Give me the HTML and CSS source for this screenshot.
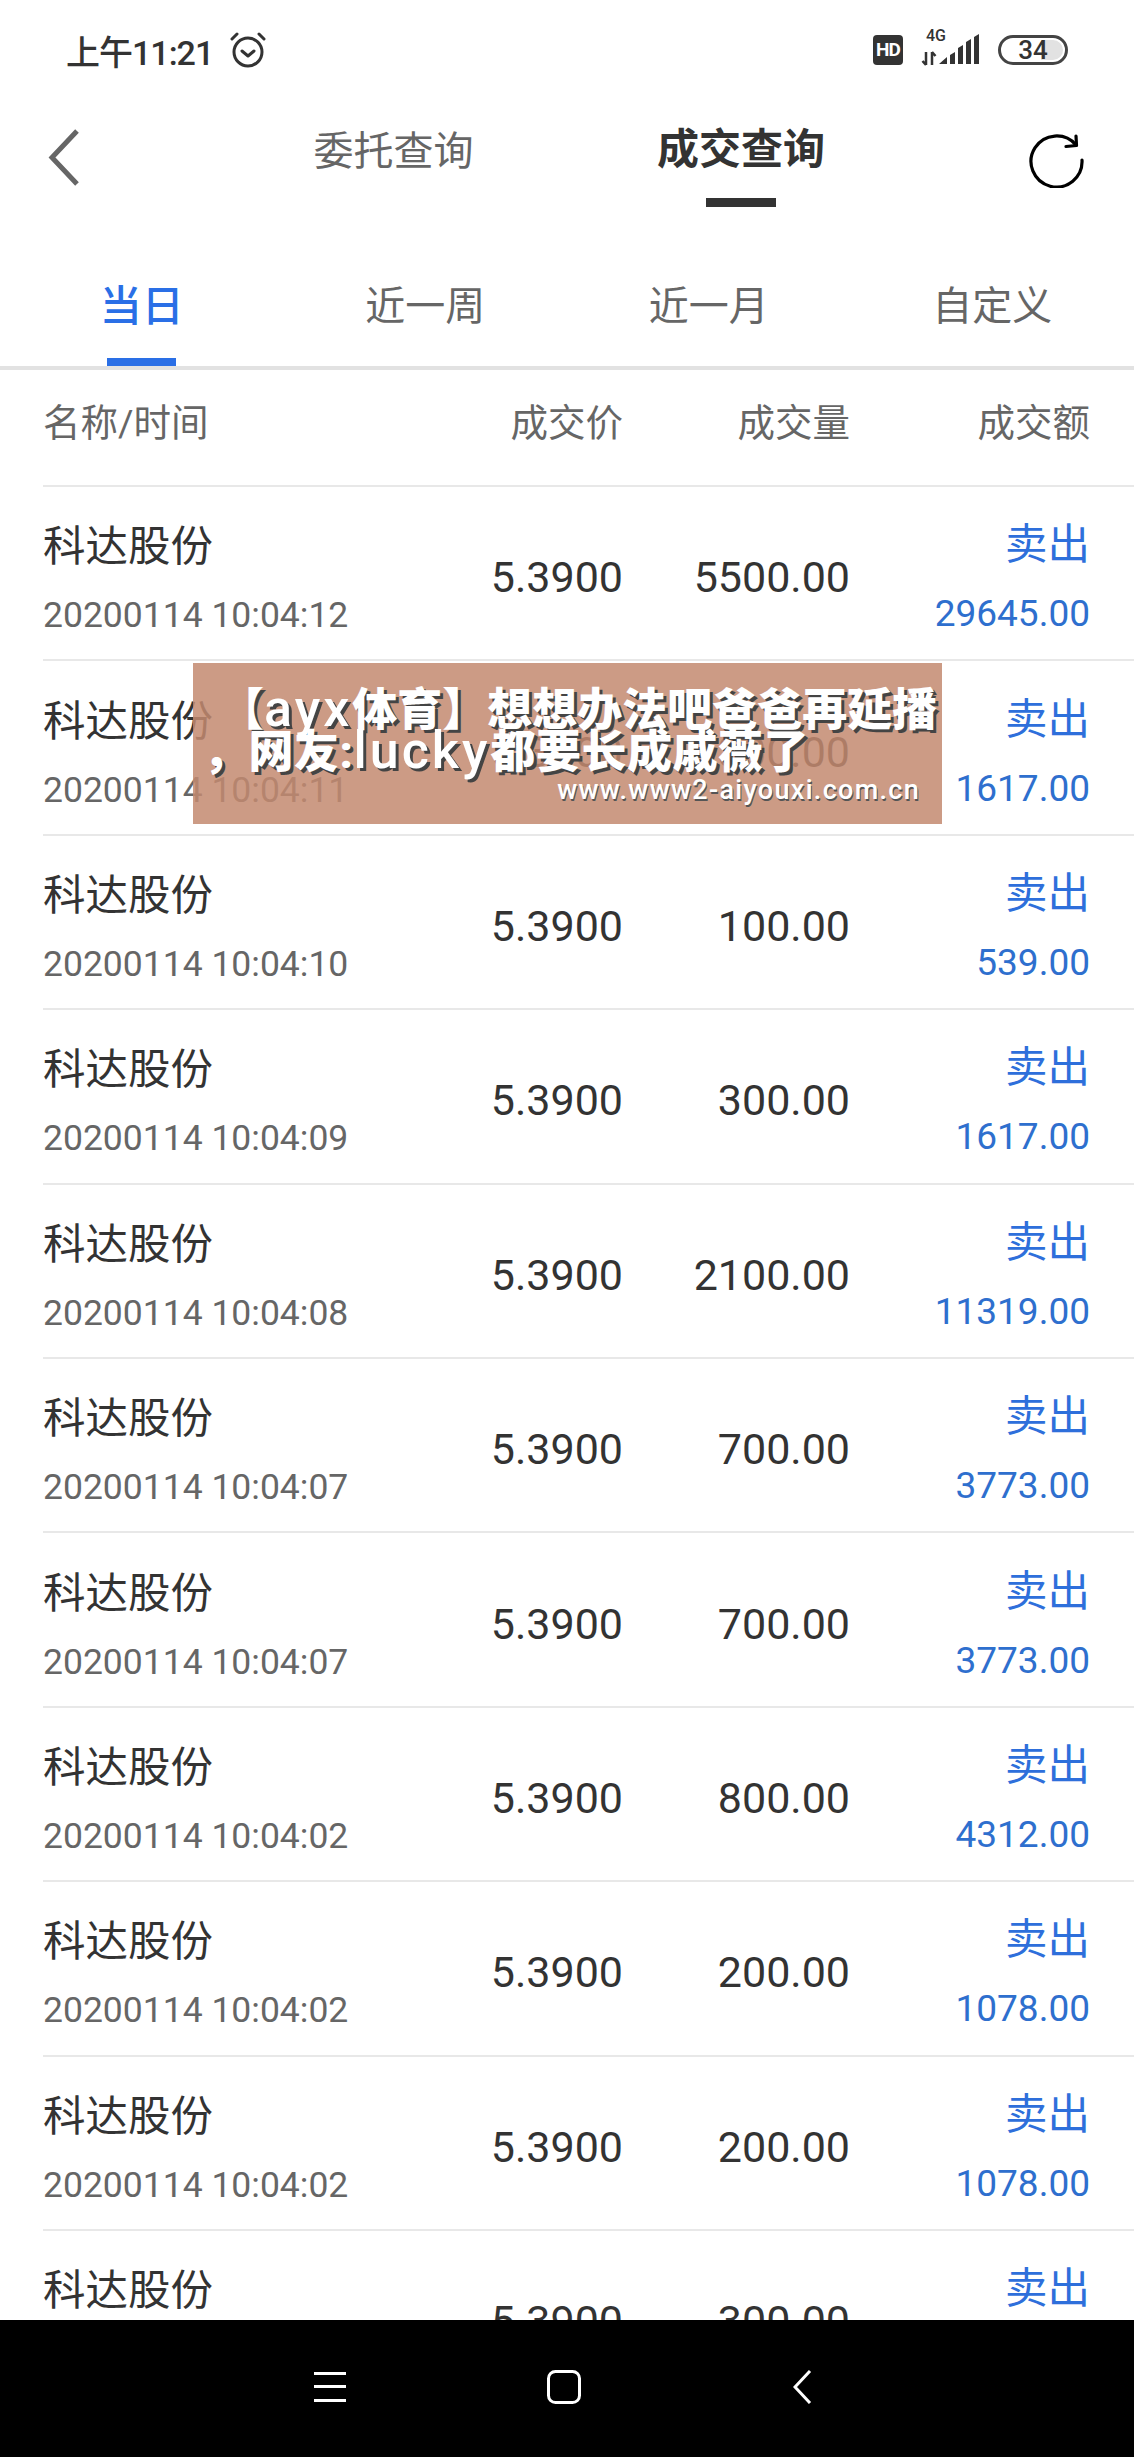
FILE: index.html
```html
<!DOCTYPE html>
<html lang="zh-CN">
  <head>
    <meta charset="UTF-8" />
    <meta name="viewport" content="width=device-width, initial-scale=1.0" />
    <title>成交查询</title>
    <link rel="stylesheet" href="styles.css">
  </head>
  <body>
    <div class="page">
      <div class="status-bar">
        <div class="status-left">
          <span class="clock">上午11:21</span>
          <svg class="alarm" width="36" height="36" viewBox="0 0 36 36" fill="none" stroke="#333" stroke-width="3" stroke-linecap="round" stroke-linejoin="round">
            <circle cx="18" cy="20" r="14" />
            <path d="M12 19l6 5 6-5" />
            <path d="M2 7l5-5M34 7l-5-5" />
          </svg>
        </div>
        <div class="status-right">
          <span class="hd">HD</span>
          <div class="signal">
            <span class="net">4G</span>
            <svg width="60" height="32" viewBox="0 0 60 32" fill="#333">
              <path d="M5 18v13M1.500 27l3.500 4M11 31V18M11 18l3.500 4" fill="none" stroke="#333" stroke-width="2.500" />
              <path d="M18 30l8-7v7zM29 21l5-3v12h-5zM37 14l5-3v19h-5zM45 8l5-3v25h-5zM53 3l5-3v30h-5z" />
            </svg>
          </div>
          <div class="battery"><span>34</span></div>
        </div>
      </div>

      <div class="nav">
        <svg class="back" width="31" height="57" viewBox="0 0 31 57" fill="none" stroke="#666" stroke-width="5">
          <path d="M29 2L4 28.500 29 55" />
        </svg>
        <div class="title">委托查询</div>
        <div class="title active">成交查询</div>
        <svg class="refresh" width="56" height="56" viewBox="0 0 56 56" fill="none" stroke="#000" stroke-width="3.200" stroke-linecap="round" stroke-linejoin="round">
          <path d="M47 13A25.500 25.500 0 1 0 53 28" />
          <path d="M37 14.500l10.500-1L47 4" />
        </svg>
      </div>

      <div class="tabs">
        <div class="tab active">当日</div>
        <div class="tab">近一周</div>
        <div class="tab">近一月</div>
        <div class="tab">自定义</div>
      </div>

      <div class="list">
        <div class="list-head">
          <div>名称/时间</div>
          <div class="num">成交价</div>
          <div class="num">成交量</div>
          <div class="num">成交额</div>
        </div>

        <div class="row">
          <div class="stock"><div class="name">科达股份</div><div class="time">20200114 10:04:12</div></div>
          <div class="num">5.3900</div>
          <div class="num">5500.00</div>
          <div class="deal"><div class="side">卖出</div><div class="sum">29645.00</div></div>
        </div>
        <div class="row">
          <div class="stock"><div class="name">科达股份</div><div class="time">20200114 10:04:11</div></div>
          <div class="num">5.3900</div>
          <div class="num">300.00</div>
          <div class="deal"><div class="side">卖出</div><div class="sum">1617.00</div></div>
        </div>
        <div class="row">
          <div class="stock"><div class="name">科达股份</div><div class="time">20200114 10:04:10</div></div>
          <div class="num">5.3900</div>
          <div class="num">100.00</div>
          <div class="deal"><div class="side">卖出</div><div class="sum">539.00</div></div>
        </div>
        <div class="row">
          <div class="stock"><div class="name">科达股份</div><div class="time">20200114 10:04:09</div></div>
          <div class="num">5.3900</div>
          <div class="num">300.00</div>
          <div class="deal"><div class="side">卖出</div><div class="sum">1617.00</div></div>
        </div>
        <div class="row">
          <div class="stock"><div class="name">科达股份</div><div class="time">20200114 10:04:08</div></div>
          <div class="num">5.3900</div>
          <div class="num">2100.00</div>
          <div class="deal"><div class="side">卖出</div><div class="sum">11319.00</div></div>
        </div>
        <div class="row">
          <div class="stock"><div class="name">科达股份</div><div class="time">20200114 10:04:07</div></div>
          <div class="num">5.3900</div>
          <div class="num">700.00</div>
          <div class="deal"><div class="side">卖出</div><div class="sum">3773.00</div></div>
        </div>
        <div class="row">
          <div class="stock"><div class="name">科达股份</div><div class="time">20200114 10:04:07</div></div>
          <div class="num">5.3900</div>
          <div class="num">700.00</div>
          <div class="deal"><div class="side">卖出</div><div class="sum">3773.00</div></div>
        </div>
        <div class="row">
          <div class="stock"><div class="name">科达股份</div><div class="time">20200114 10:04:02</div></div>
          <div class="num">5.3900</div>
          <div class="num">800.00</div>
          <div class="deal"><div class="side">卖出</div><div class="sum">4312.00</div></div>
        </div>
        <div class="row">
          <div class="stock"><div class="name">科达股份</div><div class="time">20200114 10:04:02</div></div>
          <div class="num">5.3900</div>
          <div class="num">200.00</div>
          <div class="deal"><div class="side">卖出</div><div class="sum">1078.00</div></div>
        </div>
        <div class="row">
          <div class="stock"><div class="name">科达股份</div><div class="time">20200114 10:04:02</div></div>
          <div class="num">5.3900</div>
          <div class="num">200.00</div>
          <div class="deal"><div class="side">卖出</div><div class="sum">1078.00</div></div>
        </div>
        <div class="row">
          <div class="stock"><div class="name">科达股份</div><div class="time">20200114 10:04:02</div></div>
          <div class="num">5.3900</div>
          <div class="num">300.00</div>
          <div class="deal"><div class="side">卖出</div><div class="sum">1617.00</div></div>
        </div>
      </div>

      <div class="nav-bar">
        <svg width="32" height="30" viewBox="0 0 32 30" fill="#fff">
          <rect x="0" y="0" width="32" height="3" />
          <rect x="0" y="13" width="32" height="3" />
          <rect x="0" y="27" width="32" height="3" />
        </svg>
        <svg width="34" height="34" viewBox="0 0 34 34" fill="none" stroke="#fff" stroke-width="3">
          <rect x="1.500" y="1.500" width="31" height="31" rx="7" />
        </svg>
        <svg class="nav-back" width="19" height="34" viewBox="0 0 19 34" fill="none" stroke="#fff" stroke-width="3">
          <path d="M17 1L2 17l15 16" />
        </svg>
      </div>

      <div class="banner">
        <div class="banner-line first">【<span class="latin">ayx</span>体育】想想办法吧爸爸再延播</div>
        <div class="banner-line second">，网友:<span class="latin">lucky</span>都要长成戚薇了</div>
        <div class="banner-url">www.www2-aiyouxi.com.cn</div>
      </div>
    </div>
  </body>
</html>
```

FILE: styles.css
```css
* {
  box-sizing: border-box;
}
html,
body {
  margin: 0;
  padding: 0;
  background-color: #fff;
}
body {
  font-family: Roboto, "Noto Sans CJK SC", sans-serif;
  color: #333;
}
.page {
  position: relative;
  display: flex;
  flex-direction: column;
  width: 1134px;
  height: 2457px;
  overflow: hidden;
}

/* status bar */
.status-bar {
  display: flex;
  justify-content: space-between;
  align-items: center;
  height: 100px;
  padding: 0 66px 0 66px;
}
.status-left,
.status-right {
  display: flex;
  align-items: center;
}
.clock {
  font-size: 34px;
  font-weight: 500;
  letter-spacing: -1px;
  color: #333;
}
.alarm {
  margin-left: 17px;
}
.hd {
  width: 30px;
  height: 30px;
  border-radius: 4px;
  background-color: #333;
  color: #fff;
  font-size: 19px;
  font-weight: 700;
  line-height: 30px;
  text-align: center;
  letter-spacing: -1px;
}
.signal {
  position: relative;
  width: 60px;
  height: 32px;
  margin: 0 17px 0 18px;
}
.signal svg {
  display: block;
}
.net {
  position: absolute;
  left: 5px;
  top: -7px;
  font-size: 16px;
  font-weight: 500;
  line-height: 18px;
}
.battery {
  position: relative;
  width: 70px;
  height: 30px;
  border: 3px solid #444;
  border-radius: 15px;
  overflow: hidden;
  text-align: center;
  font-size: 26px;
  font-weight: 500;
  line-height: 24px;
}
.battery::after {
  content: "";
  position: absolute;
  top: 2px;
  right: 2px;
  bottom: 2px;
  width: 22px;
  border-radius: 0 10px 10px 0;
  background-color: #e2e2e2;
}
.battery span {
  position: relative;
  z-index: 1;
}

/* title row */
.nav {
  display: flex;
  align-items: flex-start;
  height: 130px;
}
.back {
  margin: 29px 0 0 48px;
}
.title {
  position: relative;
  width: 161px;
  margin-left: 234px;
  margin-top: 27px;
  font-size: 40px;
  line-height: 50px;
  text-align: center;
  color: #666;
  white-space: nowrap;
}
.title.active {
  width: 170px;
  margin-left: 182px;
  margin-top: 25px;
  font-size: 42px;
  font-weight: 700;
  color: #333;
}
.title.active::after {
  content: "";
  position: absolute;
  left: 50px;
  top: 73px;
  width: 70px;
  height: 9px;
  background-color: #333;
}
.refresh {
  margin: 32px 0 0 203px;
}

/* period tabs */
.tabs {
  display: flex;
  height: 140px;
  border-bottom: 4px solid #e2e2e2;
}
.tab {
  position: relative;
  flex: 1;
  padding-top: 53px;
  font-size: 40px;
  line-height: 48px;
  text-align: center;
  color: #666;
}
.tab.active {
  font-size: 42px;
  font-weight: 500;
  color: #2a6fe6;
}
.tab.active::after {
  content: "";
  position: absolute;
  left: 107px;
  bottom: 0;
  width: 69px;
  height: 8px;
  background-color: #2a6fe6;
}

/* deal list */
.list {
  flex: 1;
  min-height: 0;
  overflow: hidden;
}
.list-head,
.row {
  display: grid;
  grid-template-columns: 1fr 200px 227px 240px;
  align-items: center;
  margin-left: 43px;
  padding-right: 44px;
  border-bottom: 2px solid #e8e8e8;
}
.list-head {
  height: 117px;
  padding-bottom: 17px;
  font-size: 37.500px;
  color: #666;
}
.row {
  height: 174.400px;
  padding-top: 8px;
  font-size: 43px;
  color: #333;
}
.num {
  text-align: right;
}
.stock,
.deal {
  display: flex;
  flex-direction: column;
  gap: 17px;
  padding-top: 3px;
}
.name {
  font-size: 42.500px;
  line-height: 56px;
}
.time {
  font-size: 35.500px;
  line-height: 46px;
  color: #666;
}
.deal {
  align-items: flex-end;
  gap: 18px;
  padding-top: 0;
}
.side {
  font-size: 42.500px;
  line-height: 56px;
  color: #2e6fdb;
}
.sum {
  font-size: 37px;
  line-height: 46px;
  color: #2e6fce;
}

/* bottom navigation */
.nav-bar {
  flex: none;
  display: flex;
  align-items: center;
  gap: 201px;
  height: 137px;
  padding: 0 0 3px 314px;
  background-color: #000;
}
.nav-back {
  margin-left: 11px;
}

/* ad banner over the list */
.banner {
  position: absolute;
  left: 193px;
  top: 663px;
  width: 749px;
  height: 161px;
  padding-top: 24px;
  background-color: rgba(195, 138, 112, 0.85);
  color: #fff;
  white-space: nowrap;
}
.banner-line {
  font-size: 45px;
  font-weight: 900;
  line-height: 44px;
  text-shadow: 3px 3px 0 #444;
}
.latin {
  font-size: 52px;
  font-weight: 500;
  letter-spacing: 3px;
}
.banner-line.first {
  margin-left: 26px;
}
.banner-line.second {
  margin-top: -4px;
  margin-left: 10px;
  letter-spacing: 0.500px;
}
.banner-url {
  margin-top: -1px;
  padding-right: 22px;
  font-size: 27px;
  font-weight: 500;
  line-height: 32px;
  letter-spacing: 1.300px;
  text-align: right;
  text-shadow: 1px 2px 0 #555;
}
```
